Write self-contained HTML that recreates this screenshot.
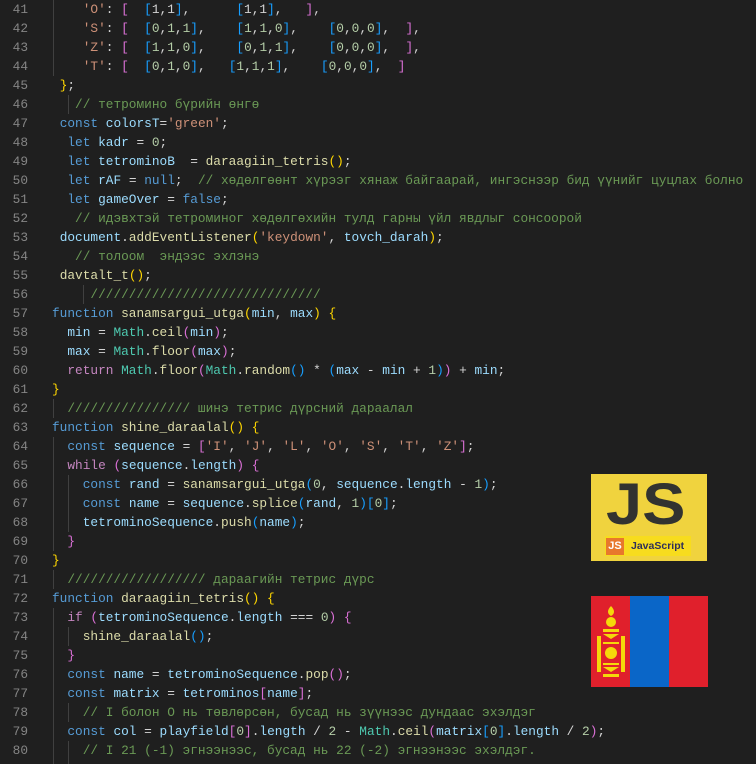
<!DOCTYPE html>
<html><head><meta charset="utf-8"><style>
html,body{margin:0;padding:0;background:#1f1f1f;width:756px;height:764px;overflow:hidden}
.ln{position:absolute;left:0;top:0;width:28px;text-align:right;color:#858585}
.code{position:absolute;left:52px;top:0}
pre{margin:0;font-family:"Liberation Mono","DejaVu Sans Mono",monospace;font-size:12.8px;line-height:19px;color:#d4d4d4;white-space:pre}
.k{color:#569cd6}.c{color:#c586c0}.v{color:#9cdcfe}.f{color:#dcdcaa}.s{color:#ce9178}.m{color:#6a9955}.n{color:#b5cea8}.t{color:#4ec9b0}.y{color:#ffd700}.p{color:#da70d6}.b{color:#179fff}
.g{position:absolute;width:1px;background:#404040}
</style></head><body>
<div class="g" style="left:53px;top:0;height:76px"></div>
<div class="g" style="left:68px;top:95px;height:19px"></div>
<div class="g" style="left:83px;top:285px;height:19px"></div>
<div class="g" style="left:53px;top:399px;height:19px"></div>
<div class="g" style="left:53px;top:437px;height:114px"></div>
<div class="g" style="left:68px;top:475px;height:57px"></div>
<div class="g" style="left:53px;top:570px;height:19px"></div>
<div class="g" style="left:53px;top:608px;height:156px"></div>
<div class="g" style="left:68px;top:627px;height:19px"></div>
<div class="g" style="left:68px;top:703px;height:19px"></div>
<div class="g" style="left:68px;top:741px;height:23px"></div>
<pre class="ln">41
42
43
44
45
46
47
48
49
50
51
52
53
54
55
56
57
58
59
60
61
62
63
64
65
66
67
68
69
70
71
72
73
74
75
76
77
78
79
80</pre>
<pre class="code">    <span class="s">'O'</span>: <span class="p">[</span>  <span class="b">[</span>1,1<span class="b">]</span>,      <span class="b">[</span>1,1<span class="b">]</span>,   <span class="p">]</span>,
    <span class="s">'S'</span>: <span class="p">[</span>  <span class="b">[</span><span class="n">0</span>,<span class="n">1</span>,<span class="n">1</span><span class="b">]</span>,    <span class="b">[</span><span class="n">1</span>,<span class="n">1</span>,<span class="n">0</span><span class="b">]</span>,    <span class="b">[</span><span class="n">0</span>,<span class="n">0</span>,<span class="n">0</span><span class="b">]</span>,  <span class="p">]</span>,
    <span class="s">'Z'</span>: <span class="p">[</span>  <span class="b">[</span><span class="n">1</span>,<span class="n">1</span>,<span class="n">0</span><span class="b">]</span>,    <span class="b">[</span><span class="n">0</span>,<span class="n">1</span>,<span class="n">1</span><span class="b">]</span>,    <span class="b">[</span><span class="n">0</span>,<span class="n">0</span>,<span class="n">0</span><span class="b">]</span>,  <span class="p">]</span>,
    <span class="s">'T'</span>: <span class="p">[</span>  <span class="b">[</span><span class="n">0</span>,<span class="n">1</span>,<span class="n">0</span><span class="b">]</span>,   <span class="b">[</span><span class="n">1</span>,<span class="n">1</span>,<span class="n">1</span><span class="b">]</span>,    <span class="b">[</span><span class="n">0</span>,<span class="n">0</span>,<span class="n">0</span><span class="b">]</span>,  <span class="p">]</span>
 <span class="y">}</span>;
   <span class="m">// тетромино бүрийн өнгө</span>
 <span class="k">const</span> <span class="v">colorsT</span>=<span class="s">'green'</span>;
  <span class="k">let</span> <span class="v">kadr</span> = <span class="n">0</span>;
  <span class="k">let</span> <span class="v">tetrominoB</span>  = <span class="f">daraagiin_tetris</span><span class="y">()</span>;
  <span class="k">let</span> <span class="v">rAF</span> = <span class="k">null</span>;  <span class="m">// хөдөлгөөнт хүрээг хянаж байгаарай, ингэснээр бид үүнийг цуцлах болно</span>
  <span class="k">let</span> <span class="v">gameOver</span> = <span class="k">false</span>;
   <span class="m">// идэвхтэй тетроминог хөдөлгөхийн тулд гарны үйл явдлыг сонсоорой</span>
 <span class="v">document</span>.<span class="f">addEventListener</span><span class="y">(</span><span class="s">'keydown'</span>, <span class="v">tovch_darah</span><span class="y">)</span>;
   <span class="m">// толоом  эндээс эхлэнэ</span>
 <span class="f">davtalt_t</span><span class="y">()</span>;
     <span class="m">//////////////////////////////</span>
<span class="k">function</span> <span class="f">sanamsargui_utga</span><span class="y">(</span><span class="v">min</span>, <span class="v">max</span><span class="y">)</span> <span class="y">{</span>
  <span class="v">min</span> = <span class="t">Math</span>.<span class="f">ceil</span><span class="p">(</span><span class="v">min</span><span class="p">)</span>;
  <span class="v">max</span> = <span class="t">Math</span>.<span class="f">floor</span><span class="p">(</span><span class="v">max</span><span class="p">)</span>;
  <span class="c">return</span> <span class="t">Math</span>.<span class="f">floor</span><span class="p">(</span><span class="t">Math</span>.<span class="f">random</span><span class="b">()</span> * <span class="b">(</span><span class="v">max</span> - <span class="v">min</span> + <span class="n">1</span><span class="b">)</span><span class="p">)</span> + <span class="v">min</span>;
<span class="y">}</span>
  <span class="m">//////////////// шинэ тетрис дүрсний дараалал</span>
<span class="k">function</span> <span class="f">shine_daraalal</span><span class="y">()</span> <span class="y">{</span>
  <span class="k">const</span> <span class="v">sequence</span> = <span class="p">[</span><span class="s">'I'</span>, <span class="s">'J'</span>, <span class="s">'L'</span>, <span class="s">'O'</span>, <span class="s">'S'</span>, <span class="s">'T'</span>, <span class="s">'Z'</span><span class="p">]</span>;
  <span class="c">while</span> <span class="p">(</span><span class="v">sequence</span>.<span class="v">length</span><span class="p">)</span> <span class="p">{</span>
    <span class="k">const</span> <span class="v">rand</span> = <span class="f">sanamsargui_utga</span><span class="b">(</span><span class="n">0</span>, <span class="v">sequence</span>.<span class="v">length</span> - <span class="n">1</span><span class="b">)</span>;
    <span class="k">const</span> <span class="v">name</span> = <span class="v">sequence</span>.<span class="f">splice</span><span class="b">(</span><span class="v">rand</span>, <span class="n">1</span><span class="b">)[</span><span class="n">0</span><span class="b">]</span>;
    <span class="v">tetrominoSequence</span>.<span class="f">push</span><span class="b">(</span><span class="v">name</span><span class="b">)</span>;
  <span class="p">}</span>
<span class="y">}</span>
  <span class="m">////////////////// дараагийн тетрис дүрс</span>
<span class="k">function</span> <span class="f">daraagiin_tetris</span><span class="y">()</span> <span class="y">{</span>
  <span class="c">if</span> <span class="p">(</span><span class="v">tetrominoSequence</span>.<span class="v">length</span> === <span class="n">0</span><span class="p">)</span> <span class="p">{</span>
    <span class="f">shine_daraalal</span><span class="b">()</span>;
  <span class="p">}</span>
  <span class="k">const</span> <span class="v">name</span> = <span class="v">tetrominoSequence</span>.<span class="f">pop</span><span class="p">()</span>;
  <span class="k">const</span> <span class="v">matrix</span> = <span class="v">tetrominos</span><span class="p">[</span><span class="v">name</span><span class="p">]</span>;
    <span class="m">// I болон O нь төвлөрсөн, бусад нь зүүнээс дундаас эхэлдэг</span>
  <span class="k">const</span> <span class="v">col</span> = <span class="v">playfield</span><span class="p">[</span><span class="n">0</span><span class="p">]</span>.<span class="v">length</span> / <span class="n">2</span> - <span class="t">Math</span>.<span class="f">ceil</span><span class="p">(</span><span class="v">matrix</span><span class="b">[</span><span class="n">0</span><span class="b">]</span>.<span class="v">length</span> / <span class="n">2</span><span class="p">)</span>;
    <span class="m">// I 21 (-1) эгнээнээс, бусад нь 22 (-2) эгнээнээс эхэлдэг.</span></pre>

<div style="position:absolute;left:591px;top:474px;width:116px;height:87px;background:#f0d33e;overflow:hidden">
  <div style="position:absolute;left:15px;top:2px;font:bold 58px/58px 'Liberation Sans',sans-serif;color:#323330;transform:scaleX(1.12);transform-origin:left top">JS</div>
  <div style="position:absolute;left:14px;top:62px;width:86px;height:20px;background:#f7dc1e"></div>
  <div style="position:absolute;left:15px;top:64px;width:18px;height:17px;background:#e8782c;color:#fff;font:bold 11px 'Liberation Sans',sans-serif;text-align:center;line-height:17px">JS</div>
  <div style="position:absolute;left:40px;top:66px;font:bold 10.5px 'Liberation Sans',sans-serif;color:#2e2f5a">JavaScript</div>
</div>
<div style="position:absolute;left:591px;top:596px;width:117px;height:91px;background:#e0202c">
  <div style="position:absolute;left:39px;top:0;width:39px;height:91px;background:#0a66c8"></div>
  <svg style="position:absolute;left:4px;top:10px" width="32" height="78" viewBox="0 0 32 78" fill="#f5d80a">
    <path d="M16 0 C12 4 12 8 16 10 C20 8 20 4 16 0Z"/>
    <circle cx="16" cy="16" r="5"/>
    <path d="M8 23 h16 v3 h-16z M8 28 L16 33 L24 28z"/>
    <rect x="2" y="30" width="4" height="36"/><rect x="26" y="30" width="4" height="36"/>
    <rect x="8" y="36" width="16" height="2"/>
    <circle cx="16" cy="47" r="6"/>
    <rect x="8" y="57" width="16" height="2"/>
    <path d="M8 61 L16 66 L24 61z"/>
    <rect x="8" y="68" width="16" height="3"/>
  </svg>
</div>
</body></html>
